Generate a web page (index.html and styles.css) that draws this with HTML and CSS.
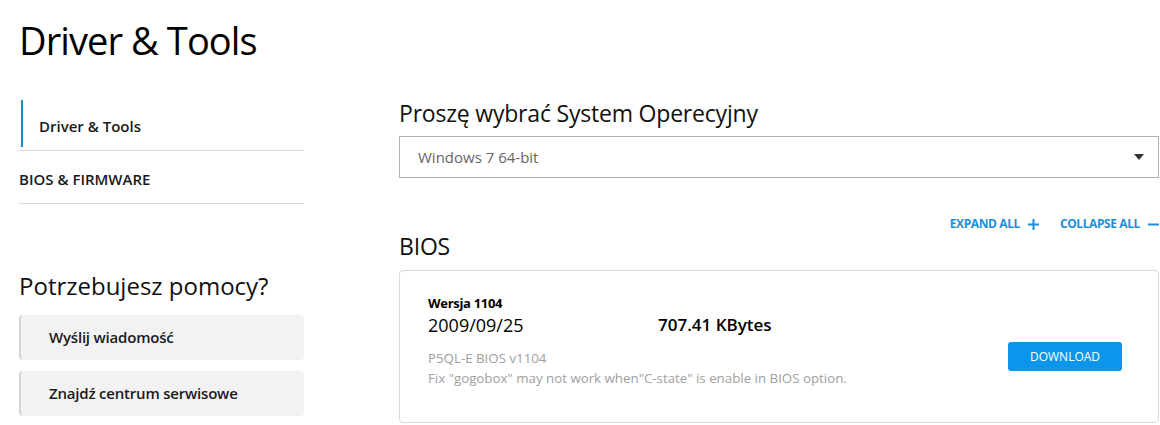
FILE: index.html
```html
<!DOCTYPE html>
<html lang="pl">
<head>
  <meta charset="UTF-8" />
  <title>Driver &amp; Tools</title>
  <link rel="stylesheet" href="styles.css">
</head>
<body>
  <div class="page">
    <h1 class="page-title">Driver &amp; Tools</h1>

    <div class="layout">
      <aside class="sidebar">
        <ul class="side-nav">
          <li class="side-item active">Driver &amp; Tools</li>
          <li class="side-item">BIOS &amp; FIRMWARE</li>
        </ul>

        <h2 class="help-title">Potrzebujesz pomocy?</h2>
        <a class="help-btn" href="#">Wyślij wiadomość</a>
        <a class="help-btn" href="#">Znajdź centrum serwisowe</a>
      </aside>

      <main class="main">
        <h2 class="section-title">Proszę wybrać System Operecyjny</h2>
        <div class="os-select">
          <span>Windows 7 64-bit</span>
          <span class="caret"></span>
        </div>

        <div class="toggles">
          <a href="#" class="toggle">EXPAND ALL
            <svg width="11" height="11" viewBox="0 0 11 11"><path d="M5.5 0v11M0 5.5h11" stroke="currentColor" stroke-width="2"/></svg>
          </a>
          <a href="#" class="toggle">COLLAPSE ALL
            <svg width="11" height="11" viewBox="0 0 11 11"><path d="M0 5.5h11" stroke="currentColor" stroke-width="2"/></svg>
          </a>
        </div>

        <h2 class="section-title bios-title">BIOS</h2>
        <div class="card">
          <div class="card-info">
            <div class="version">Wersja 1104</div>
            <div class="meta">
              <span class="date">2009/09/25</span>
              <span class="size">707.41 KBytes</span>
            </div>
            <div class="desc">
              P5QL-E BIOS v1104<br>
              Fix "gogobox" may not work when"C-state" is enable in BIOS option.
            </div>
          </div>
          <button class="download">DOWNLOAD</button>
        </div>
      </main>
    </div>
  </div>
</body>
</html>
```

FILE: styles.css
```css
body {
  margin: 0;
  background: #fff;
  color: #000;
  font-family: 'Open Sans', 'Noto Sans', sans-serif;
}

.page {
  padding: 0 1px 0 19px;
}

.page-title {
  margin: 0;
  padding-top: 14px;
  font-size: 38px;
  font-weight: 400;
  letter-spacing: -0.9px;
  line-height: 52px;
}

.layout {
  display: flex;
  gap: 95px;
  margin-top: 34px;
}

.sidebar {
  width: 285px;
  flex-shrink: 0;
}

.side-nav {
  list-style: none;
  margin: 0;
  padding: 0;
}

.side-item {
  font-size: 15px;
  font-weight: 600;
  color: #1a1a1a;
  padding: 17px 0 13px;
  line-height: 22px;
  border-bottom: 1px solid #d9d9d9;
}

.side-item.active {
  position: relative;
  padding: 15px 0 13px 20px;
}

.side-item.active::before {
  content: "";
  position: absolute;
  left: 2px;
  top: 0;
  bottom: 3px;
  width: 2px;
  background: #1e8bc8;
}

.help-title {
  margin: 65px 0 12px;
  font-size: 24px;
  font-weight: 400;
  line-height: 34px;
  color: #111;
}

.help-btn {
  display: block;
  height: 45px;
  line-height: 45px;
  margin-bottom: 11px;
  padding-left: 28px;
  background: #f2f2f2;
  border-left: 2px solid #d4d4d4;
  border-radius: 4px;
  font-size: 15px;
  font-weight: 600;
  letter-spacing: -0.2px;
  color: #1a1a1a;
  text-decoration: none;
}

.main {
  flex: 1;
}

.section-title {
  margin: -2px 0 8px;
  font-size: 23px;
  font-weight: 400;
  letter-spacing: -0.2px;
  line-height: 30px;
  color: #111;
}

.os-select {
  display: flex;
  justify-content: space-between;
  align-items: center;
  height: 40px;
  padding: 0 14px 0 18px;
  border: 1px solid #b3b3b3;
  font-size: 15px;
  color: #666;
}

.caret {
  width: 0;
  height: 0;
  border-left: 5px solid transparent;
  border-right: 5px solid transparent;
  border-top: 6px solid #333;
}

.toggles {
  display: flex;
  justify-content: flex-end;
  gap: 21px;
  margin-top: 38px;
}

.toggle {
  display: flex;
  align-items: center;
  gap: 8px;
  font-size: 12px;
  font-weight: 700;
  letter-spacing: -0.4px;
  line-height: 16px;
  color: #1b8fd8;
  text-decoration: none;
}

.bios-title {
  margin: -1px 0 9px;
}

.card {
  display: flex;
  justify-content: space-between;
  align-items: flex-start;
  height: 153px;
  padding: 23px 36px 0 28px;
  border: 1px solid #d9d9d9;
  border-radius: 4px;
  box-sizing: border-box;
}

.version {
  font-size: 13px;
  font-weight: 700;
  letter-spacing: -0.3px;
  line-height: 18px;
}

.meta {
  display: flex;
  font-size: 18px;
  line-height: 26px;
  margin-bottom: 10px;
}

.date {
  width: 230px;
  color: #000;
}

.size {
  font-size: 17px;
  font-weight: 600;
}

.desc {
  font-size: 13.3px;
  line-height: 20px;
  color: #a0a0a0;
}

.download {
  width: 114px;
  height: 29px;
  margin-top: 48px;
  border: none;
  border-radius: 3px;
  background: #0b96ec;
  color: #fff;
  font-family: inherit;
  font-size: 12px;
  cursor: pointer;
}
```
